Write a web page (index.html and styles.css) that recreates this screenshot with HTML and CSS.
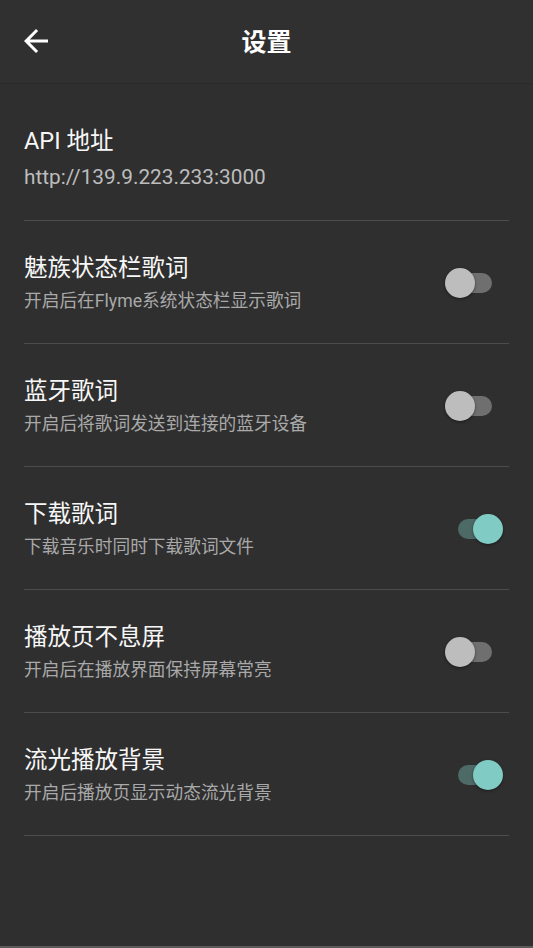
FILE: index.html
```html
<!DOCTYPE html>
<html lang="zh-CN">
<head>
<meta charset="utf-8">
<title>设置</title>
<link rel="stylesheet" href="styles.css">
</head>
<body>
<div class="screen">
  <header class="topbar">
    <button class="back" aria-label="返回">
      <svg width="36" height="36" viewBox="0 0 24 24"><path d="M20 11H7.83l5.59-5.59L12 4l-8 8 8 8 1.41-1.41L7.83 13H20v-2z" fill="#ffffff"/></svg>
    </button>
    <h1 class="title">设置</h1>
  </header>
  <main class="list">
    <div class="item item-first">
      <div class="text">
        <div class="label">API 地址</div>
        <div class="sub sub-url">http://139.9.223.233:3000</div>
      </div>
    </div>
    <div class="item">
      <div class="text">
        <div class="label">魅族状态栏歌词</div>
        <div class="sub">开启后在Flyme系统状态栏显示歌词</div>
      </div>
      <div class="switch"><span class="track"></span><span class="thumb"></span></div>
    </div>
    <div class="item">
      <div class="text">
        <div class="label">蓝牙歌词</div>
        <div class="sub">开启后将歌词发送到连接的蓝牙设备</div>
      </div>
      <div class="switch"><span class="track"></span><span class="thumb"></span></div>
    </div>
    <div class="item">
      <div class="text">
        <div class="label">下载歌词</div>
        <div class="sub">下载音乐时同时下载歌词文件</div>
      </div>
      <div class="switch on"><span class="track"></span><span class="thumb"></span></div>
    </div>
    <div class="item">
      <div class="text">
        <div class="label">播放页不息屏</div>
        <div class="sub">开启后在播放界面保持屏幕常亮</div>
      </div>
      <div class="switch"><span class="track"></span><span class="thumb"></span></div>
    </div>
    <div class="item">
      <div class="text">
        <div class="label">流光播放背景</div>
        <div class="sub">开启后播放页显示动态流光背景</div>
      </div>
      <div class="switch on"><span class="track"></span><span class="thumb"></span></div>
    </div>
  </main>
  <div class="bottom-edge"></div>
</div>
</body>
</html>
```
FILE: styles.css
```css
* { box-sizing: border-box; }
html, body {
  margin: 0;
  padding: 0;
  background: #2f2f2f;
}
body {
  font-family: Roboto, "Noto Sans CJK SC", sans-serif;
  color: #f5f5f5;
}
.screen {
  height: 948px;
  display: flex;
  flex-direction: column;
}
.topbar {
  height: 84px;
  flex: 0 0 84px;
  display: flex;
  align-items: center;
  justify-content: center;
  position: relative;
  padding-bottom: 3px;
  background: #303030;
  border-bottom: 1px solid #2a2a2a;
}
.back {
  position: absolute;
  left: 18px;
  top: 23px;
  width: 36px;
  height: 36px;
  padding: 0;
  border: 0;
  background: none;
  display: flex;
}
.title {
  margin: 0;
  font-size: 25px;
  font-weight: 700;
  line-height: 30px;
  color: #ffffff;
  font-family: "Noto Sans CJK SC", sans-serif;
}
.list {
  flex: 1;
  padding: 0 24px;
}
.item {
  display: flex;
  align-items: center;
  justify-content: space-between;
  padding: 32px 0 31px;
  border-bottom: 1px solid #4d4d4d;
}
.item-first {
  padding-top: 42px;
  padding-bottom: 31px;
}
.text {
  display: flex;
  flex-direction: column;
  gap: 7px;
}
.item-first .text { gap: 9px; }
.label {
  font-size: 23.5px;
  line-height: 30px;
  color: #f7f7f7;
}
.sub {
  font-size: 17.7px;
  line-height: 22px;
  color: #a9a9a9;
}
.sub-url {
  font-size: 20.8px;
  line-height: 24px;
  color: #bdbdbd;
}
.switch {
  position: relative;
  width: 58px;
  height: 30px;
  margin-right: 6px;
  flex: 0 0 auto;
}
.track {
  position: absolute;
  left: 13px;
  top: 5px;
  width: 34px;
  height: 20px;
  border-radius: 10px;
  background: #6f6f6f;
}
.thumb {
  position: absolute;
  left: 0;
  top: 0;
  width: 30px;
  height: 30px;
  border-radius: 50%;
  background: #bdbdbd;
  box-shadow: 0 1px 3px rgba(0,0,0,0.45);
}
.switch.on .track { background: #4e6a67; }
.switch.on .thumb {
  left: auto;
  right: 0;
  background: #80cbc4;
}
.bottom-edge {
  height: 2px;
  flex: 0 0 2px;
  background: #5a5a5a;
}
```
